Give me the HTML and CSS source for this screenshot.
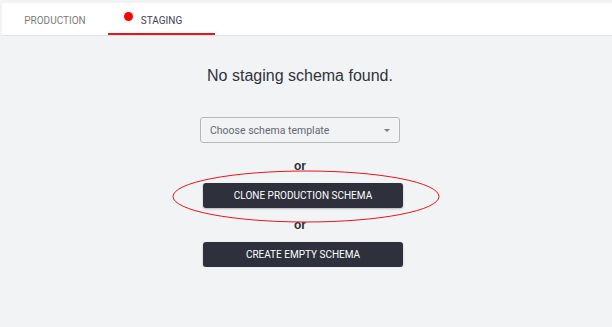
FILE: index.html
```html
<!DOCTYPE html>
<html lang="en">
<head>
    <meta charset="UTF-8">
    <meta name="viewport" content="width=device-width, initial-scale=1.0">
    <title>Schema</title>
    <link rel="stylesheet" href="styles.css">
</head>
<body>
    <div class="tab-bar">
        <div class="tab">PRODUCTION</div>
        <div class="tab active">
            <span class="status-dot"></span>
            STAGING
        </div>
    </div>

    <div class="schema-container">
        <h2 class="empty-title">No staging schema found.</h2>
        <div class="template-select">
            <span>Choose schema template</span>
            <span class="select-arrow"></span>
        </div>
        <div class="or-label">or</div>
        <div class="btn-wrap">
            <button class="btn">CLONE PRODUCTION SCHEMA</button>
            <svg class="highlight" width="268" height="53" viewBox="0 0 268 53">
                <ellipse cx="134" cy="26.5" rx="133" ry="25.5" fill="none" stroke="#e8141c" stroke-width="1"/>
            </svg>
        </div>
        <div class="or-label">or</div>
        <div class="btn-wrap">
            <button class="btn">CREATE EMPTY SCHEMA</button>
        </div>
    </div>
</body>
</html>
```

FILE: styles.css
```css
body {
    margin: 0;
    background-color: #f2f3f5;
    font-family: Roboto, "Liberation Sans", Arial, sans-serif;
}
.tab-bar {
    display: flex;
    height: 32px;
    margin: 3px 0 0 2px;
    background: #fff;
    border-bottom: 1px solid #e2e3e5;
}
.tab {
    position: relative;
    width: 106px;
    display: flex;
    align-items: center;
    justify-content: center;
    font-size: 10px;
    color: #7b7b7b;
    box-sizing: border-box;
    padding-top: 3px;
}
.tab.active {
    width: 107px;
    color: #3b3f4c;
    border-bottom: 2px solid #e8141c;
    padding-top: 5px;
}
.status-dot {
    position: absolute;
    left: 16px;
    top: 9px;
    width: 9px;
    height: 9px;
    border-radius: 50%;
    background: #f00;
}
.schema-container {
    display: flex;
    flex-direction: column;
    align-items: center;
    padding-right: 12px;
}
.empty-title {
    margin: 31px 0 0;
    font-family: "Liberation Sans", Arial, sans-serif;
    font-size: 16px;
    font-weight: normal;
    line-height: 18px;
    color: #2f3340;
}
.template-select {
    width: 200px;
    height: 26px;
    margin-top: 32px;
    box-sizing: border-box;
    border: 1px solid #b7b8ba;
    border-radius: 3px;
    display: flex;
    align-items: center;
    justify-content: space-between;
    padding: 0 9px 0 9px;
    font-size: 10.5px;
    color: #646873;
}
.select-arrow {
    width: 0;
    height: 0;
    border-left: 3.5px solid transparent;
    border-right: 3.5px solid transparent;
    border-top: 3.5px solid #7d7d7d;
    margin-top: 1px;
}
.or-label {
    margin: 16px 0 0;
    font-family: "Liberation Sans", Arial, sans-serif;
    font-size: 12px;
    font-weight: bold;
    line-height: 14px;
    color: #2b2f3a;
}
.or-label + .btn-wrap {
    margin-top: 10px;
}
.btn-wrap + .or-label {
    margin-top: 10px;
}
.btn-wrap {
    position: relative;
    margin-left: 6px;
}
.btn {
    display: block;
    width: 200px;
    height: 25px;
    border: none;
    border-radius: 3px;
    background-color: #2e313c;
    color: #fff;
    font-family: Roboto, "Liberation Sans", Arial, sans-serif;
    font-size: 10px;
    box-shadow: 0 1px 2px rgba(0,0,0,0.25);
    cursor: pointer;
}
.highlight {
    position: absolute;
    left: -31px;
    top: -13px;
    pointer-events: none;
}
```
